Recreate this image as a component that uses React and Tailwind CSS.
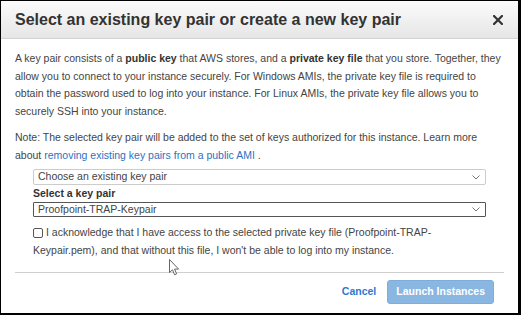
import React from "react";

function Chevron() {
  return (
    <svg width="8" height="5" viewBox="0 0 8 5" className="shrink-0">
      <path d="M0.5 0.5 L4 4 L7.5 0.5" fill="none" stroke="#777" strokeWidth="1" />
    </svg>
  );
}

export default function App() {
  return (
    <div
      className="relative w-[521px] h-[315px] box-border bg-white border-black border-l border-t border-r-[3px] border-b-[2px] overflow-hidden text-[#444]"
      style={{ fontFamily: '"Liberation Sans", Arial, sans-serif' }}
    >
      {/* Header */}
      <div className="h-[38px] flex items-center justify-between pl-[14px] pr-[15px] bg-gradient-to-b from-[#fbfbfb] to-[#e6e6e6] border-b border-[#d2d2d2]">
        <h1 className="text-[16px] font-bold text-[#333] leading-none">
          Select an existing key pair or create a new key pair
        </h1>
        <svg width="10" height="10" viewBox="0 0 10 10">
          <path d="M1 1 L9 9 M9 1 L1 9" stroke="#333" strokeWidth="2.2" strokeLinecap="square" />
        </svg>
      </div>

      {/* Body */}
      <div className="px-[14px] pt-[11px] text-[10.5px] leading-[17.5px]">
        <p className="whitespace-nowrap">
          A key pair consists of a <b className="text-[#333]">public key</b> that AWS stores, and a{" "}
          <b className="text-[#333]">private key file</b> that you store. Together, they
          <br />
          allow you to connect to your instance securely. For Windows AMIs, the private key file is required to
          <br />
          obtain the password used to log into your instance. For Linux AMIs, the private key file allows you to
          <br />
          securely SSH into your instance.
        </p>
        <p className="mt-[9px] whitespace-nowrap">
          Note: The selected key pair will be added to the set of keys authorized for this instance. Learn more
          <br />
          about <span className="text-[#2a72c4]"> removing existing key pairs from a public AMI</span> .
        </p>

        <div className="mx-[18px] mt-[5px]">
          <div className="h-[16px] flex items-center justify-between pl-[4px] pr-[5px] border border-[#ccc] rounded-[2px] bg-white text-[#444]">
            <span>Choose an existing key pair</span>
            <Chevron />
          </div>
          <div className="font-bold text-[#333] leading-[17px]">Select a key pair</div>
          <div className="h-[15px] flex items-center justify-between pl-[4px] pr-[5px] border border-[#555] rounded-[1px] bg-white text-[#444]">
            <span>Proofpoint-TRAP-Keypair</span>
            <Chevron />
          </div>
          <div className="mt-[7px] whitespace-nowrap">
            <div className="flex items-center">
              <span className="inline-block w-[10px] h-[10px] border border-[#555] rounded-[2px] bg-white mr-[3px]" />
              <span>I acknowledge that I have access to the selected private key file (Proofpoint-TRAP-</span>
            </div>
            <div>Keypair.pem), and that without this file, I won't be able to log into my instance.</div>
          </div>
        </div>

        <div className="mt-[13px] h-px bg-[#cfcfcf]" />

        <div className="flex items-center justify-end gap-[11px] mt-[7px] pr-[10px]">
          <span className="text-[10.5px] font-bold text-[#2b78d0]">Cancel</span>
          <div className="h-[24px] px-[8px] flex items-center rounded-[3px] bg-[#8ab6e2] border border-[#7fadd9] text-white font-bold text-[10.5px]">
            Launch Instances
          </div>
        </div>
      </div>

      {/* Mouse cursor */}
      <svg className="absolute left-[168px] top-[258px]" width="12" height="18" viewBox="0 0 12 18">
        <path
          d="M0.5 0.5 L0.5 13.5 L3.5 10.8 L5.6 15.8 L7.6 14.9 L5.6 10.1 L9.6 10.1 Z"
          fill="#fff"
          stroke="#666"
          strokeWidth="1"
          strokeLinejoin="round"
        />
      </svg>
    </div>
  );
}
